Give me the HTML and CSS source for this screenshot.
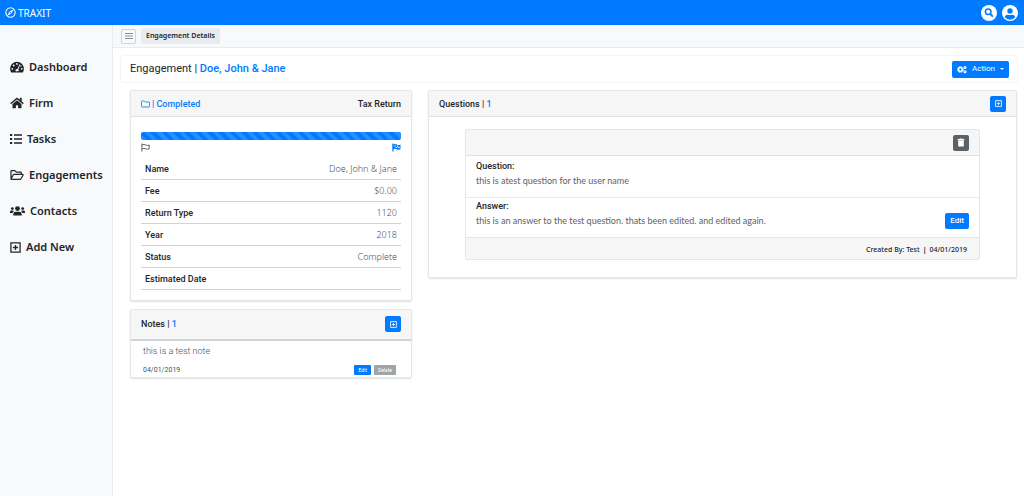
FILE: index.html
```html
<!DOCTYPE html>
<html lang="en">
<head>
<meta charset="utf-8">
<title>Traxit - Engagement Details</title>
<link rel="stylesheet" href="styles.css">
</head>
<body>
<svg class="sprite" aria-hidden="true">
  <symbol id="plus-box" viewBox="0 0 12 12"><path d="M1 1h10v10H1zM6 3.2v5.6M3.2 6h5.6" fill="none" stroke="currentColor" stroke-width="1.4"/></symbol>
</svg>
<header class="topbar">
  <a class="brand" href="#">
    <svg class="brand-icon" viewBox="0 0 12 12"><circle cx="6" cy="6" r="5.1" fill="none" stroke="currentColor" stroke-width="1.1"/><path fill="currentColor" fill-rule="evenodd" d="M9.6 2.4 7.1 7.2 2.4 9.6 4.9 4.8zM6 5.1a.9.9 0 1 0 0 1.8.9.9 0 0 0 0-1.8z"/></svg>
    <span>TRAXIT</span>
  </a>
  <div class="top-actions">
    <button class="round" type="button" aria-label="Search"><svg viewBox="0 0 16 16"><circle cx="8" cy="8" r="8" fill="#fff"/><circle cx="7.2" cy="6.8" r="2.8" fill="none" stroke="#007bff" stroke-width="1.5"/><path d="m9.3 9 2.6 2.6" stroke="#007bff" stroke-width="1.8"/></svg></button>
    <button class="round" type="button" aria-label="Account"><svg viewBox="0 0 16 16"><circle cx="8" cy="8" r="8" fill="#fff"/><circle cx="8" cy="6" r="2.7" fill="#007bff"/><path d="M2.8 12.2c.4-1.8 1.7-2.5 3-2.5.7 0 1.300.4 2.200.4s1.500-.4 2.200-.4c1.300 0 2.600.7 3 2.500A6.700 6.700 0 0 1 8 14.700a6.700 6.700 0 0 1-5.200-2.500z" fill="#007bff"/></svg></button>
  </div>
</header>
<div class="shell">
  <nav class="sidebar">
    <a href="#"><svg class="i14" viewBox="0 0 14 12"><path fill="currentColor" d="M7 .8a7 7 0 0 0-6 10.400q.2.400.7.400h10.600q.5 0 .7-.4A7 7 0 0 0 7 .8z"/><g fill="#f8f9fa"><circle cx="2.300" cy="7.800" r=".9"/><circle cx="3.700" cy="4.500" r=".9"/><circle cx="7" cy="2.900" r=".9"/><circle cx="11.700" cy="7.800" r=".9"/><circle cx="10.900" cy="4.900" r=".7"/><path d="m9.400 3.300.8.300-1.800 4.800a1.600 1.600 0 0 1-.1 1.900H5.700a1.600 1.600 0 0 1 1.900-2.300z"/></g></svg><span>Dashboard</span></a>
    <a href="#"><svg class="i14" viewBox="0 0 576 512"><path fill="currentColor" d="M280.37 148.26L96 300.11V464a16 16 0 0 0 16 16l112.06-.29a16 16 0 0 0 15.92-16V368a16 16 0 0 1 16-16h64a16 16 0 0 1 16 16v95.64a16 16 0 0 0 16 16.05L464 480a16 16 0 0 0 16-16V300L295.67 148.26a12.19 12.19 0 0 0-15.3 0zM571.6 251.47L488 182.56V44.05a12 12 0 0 0-12-12h-56a12 12 0 0 0-12 12v72.61L318.47 43a48 48 0 0 0-61 0L4.34 251.47a12 12 0 0 0-1.6 16.9l25.5 31A12 12 0 0 0 45.15 301l235.22-193.74a12.19 12.19 0 0 1 15.3 0L530.9 301a12 12 0 0 0 16.9-1.6l25.5-31a12 12 0 0 0-1.7-16.93z"/></svg><span>Firm</span></a>
    <a href="#"><svg class="i12" viewBox="0 0 12 12"><path d="M0 2h2.200M0 6h2.200M0 10h2.200" stroke="currentColor" stroke-width="2.200"/><path d="M4 2h8M4 6h8M4 10h8" stroke="currentColor" stroke-width="1.500"/></svg><span>Tasks</span></a>
    <a href="#"><svg class="i14" viewBox="0 0 14 12"><path d="M1 10V2.200q0-.6.6-.6h3.200l1.500 1.500h4.400q.6 0 .6.600v1.500M1 10l2.300-4.200q.2-.4.7-.4h8.600q.8 0 .5.600l-2.200 4q-.2.400-.7.400H1.600Q1 10.400 1 10z" fill="none" stroke="currentColor" stroke-width="1.200" stroke-linejoin="round"/></svg><span>Engagements</span></a>
    <a href="#"><svg class="i16" viewBox="0 0 16 12"><g fill="currentColor"><circle cx="8" cy="3.400" r="2.600"/><circle cx="2.500" cy="3.400" r="1.500"/><circle cx="13.500" cy="3.400" r="1.500"/><path d="M3.500 10.800V9.200q0-2.500 2.600-2.500h3.800q2.600 0 2.600 2.500v1.600zM0 8.200V7q0-1.500 1.500-1.500h1.700q.6 0 1 .4Q3 6.700 2.800 8.200zM16 8.200V7q0-1.500-1.500-1.500h-1.700q-.6 0-1 .4 1.200.8 1.400 2.300z"/></g></svg><span>Contacts</span></a>
    <a href="#"><svg class="i11"><use href="#plus-box"/></svg><span>Add New</span></a>
  </nav>
  <main class="main">
    <div class="crumbs">
      <button class="menu" type="button" aria-label="Toggle menu"><svg viewBox="0 0 8 8"><path d="M0 1.500h8M0 4h8M0 6.500h8" stroke="#868e96" stroke-width="1"/></svg></button>
      <span class="crumb">Engagement Details</span>
    </div>
    <div class="content">
      <div class="titlebar">
        <h1>Engagement | <a href="#">Doe, John &amp; Jane</a></h1>
        <button class="btn action" type="button"><svg viewBox="0 0 10 8"><g fill="none" stroke="currentColor"><circle cx="3.400" cy="4" r="1.900" stroke-width="1.500"/><circle cx="3.400" cy="4" r="3" stroke-dasharray="1.200 1.150" stroke-width=".9"/><circle cx="8" cy="2" r="1" stroke-width="1.100"/><circle cx="8" cy="6.200" r="1" stroke-width="1.100"/></g></svg><span>Action</span><i class="caret"></i></button>
      </div>
      <div class="columns">
        <div class="stack">
          <section class="card">
            <header class="card-head">
              <h2 class="blue"><svg class="folder" viewBox="0 0 9 8"><path d="M.5 1.500q0-.5.5-.5h2.300l1 1H8q.5 0 .5.500v4q0 .5-.5.500H1q-.5 0-.5-.500z" fill="none" stroke="currentColor" stroke-width=".8"/></svg><span>| Completed</span></h2>
              <h2>Tax Return</h2>
            </header>
            <div class="details">
              <div class="progress" role="progressbar" aria-label="Progress" aria-valuenow="100"></div>
              <div class="flags">
                <svg viewBox="0 0 9 9"><path d="M.9.500v8M1 2q2-1 3.700 0t3.500 0v3.800q-1.800.9-3.500 0T1 6" fill="none" stroke="#343a40" stroke-width=".8"/></svg>
                <svg viewBox="0 0 9 9"><path d="M.9.500v8" stroke="#007bff" stroke-width="1.200"/><path d="M1 1.600q2-1 3.700 0t3.800 0v4.600q-2 1-3.700 0T1 6.200z" fill="#007bff"/><path d="M2.300 2.400h1.400v1.200H2.300zM5 2.700h1.300v1.200H5zM3.700 3.900H5v1.200H3.700zM6.300 4.100h1.300v1.200H6.300z" fill="#fff"/></svg>
              </div>
              <table>
                <tr><th scope="row">Name</th><td>Doe, John &amp; Jane</td></tr>
                <tr><th scope="row">Fee</th><td>$0.00</td></tr>
                <tr><th scope="row">Return Type</th><td>1120</td></tr>
                <tr><th scope="row">Year</th><td>2018</td></tr>
                <tr><th scope="row">Status</th><td>Complete</td></tr>
                <tr><th scope="row">Estimated Date</th><td></td></tr>
              </table>
            </div>
          </section>
          <section class="card">
            <header class="card-head notes-head">
              <h2>Notes | <span class="blue">1</span></h2>
              <button class="btn square" type="button" aria-label="Add note"><svg><use href="#plus-box"/></svg></button>
            </header>
            <div class="note">
              <p>this is a test note</p>
              <div class="note-foot"><time>04/01/2019</time><span class="note-actions"><button class="btn tiny" type="button">Edit</button><button class="btn tiny gray" type="button">Delete</button></span></div>
            </div>
          </section>
        </div>
        <section class="card">
          <header class="card-head">
            <h2>Questions | <span class="blue">1</span></h2>
            <button class="btn square" type="button" aria-label="Add question"><svg><use href="#plus-box"/></svg></button>
          </header>
          <div class="questions">
            <article class="question">
              <header class="card-head"><button class="btn square dark" type="button" aria-label="Delete question"><svg class="trash" viewBox="0 0 8 10"><path fill="currentColor" d="M.3 1.200h2L2.900.5h2.200l.6.700h2v1.200H.3zM.9 2.900h6.200v5.900q0 .7-.7.700H1.600q-.7 0-.7-.7z"/></svg></button></header>
              <div class="qa first"><h3>Question:</h3><p>this is atest question for the user name</p></div>
              <div class="qa"><h3>Answer:</h3><div class="answer"><p>this is an answer to the test question. thats been edited. and edited again.</p><button class="btn edit" type="button">Edit</button></div></div>
              <footer><span>Created By: Test</span><b>|</b><time>04/01/2019</time></footer>
            </article>
          </div>
        </section>
      </div>
    </div>
  </main>
</div>
</body>
</html>
```
FILE: styles.css
```css
* { box-sizing: border-box; }
body {
  margin: 0;
  min-height: 100vh;
  display: flex;
  flex-direction: column;
  font: 9px/14px Roboto, "Noto Sans", sans-serif;
  color: #212529;
  background: #fff;
}
.sprite { position: absolute; width: 0; height: 0; }
svg { display: block; flex: none; }
h1, h2, h3, p { margin: 0; }
a { color: #007bff; text-decoration: none; }
button { font: inherit; padding: 0; border: 0; cursor: pointer; }

.topbar {
  height: 25px;
  padding: 0 6px 0 5px;
  display: flex;
  align-items: center;
  justify-content: space-between;
  background: #007bff;
}
.brand { display: flex; align-items: center; gap: 2px; color: #fff; font-family: "Noto Sans", sans-serif; font-size: 10px; }
.brand-icon { width: 11px; height: 11px; }
.top-actions { display: flex; gap: 5px; }
.round { background: none; }
.round svg { width: 16px; height: 16px; }

.shell { flex: 1; display: flex; }
.sidebar {
  width: 113px;
  flex: none;
  padding: 34px 10px;
  display: flex;
  flex-direction: column;
  gap: 20px;
  background: #f8f9fa;
  border-right: 1px solid #e9ecef;
}
.sidebar a {
  height: 16px;
  display: flex;
  align-items: center;
  gap: 5px;
  color: #212529;
  font-family: "Noto Sans", sans-serif;
  font-size: 11px;
  font-weight: 600;
}
.i11 { width: 11px; height: 11px; }
.i12 { width: 12px; height: 12px; }
.i14 { width: 14px; height: 12px; }
.i16 { width: 15px; height: 12px; }

.main { flex: 1; min-width: 0; }
.crumbs {
  height: 23px;
  padding: 0 8px;
  display: flex;
  align-items: center;
  gap: 5px;
  background: #f8f9fa;
  border-bottom: 1px solid #e9ecef;
}
.menu {
  width: 15px;
  height: 15px;
  display: grid;
  place-items: center;
  background: #f8f9fa;
  border: 1px solid #ced4da;
  border-radius: 2px;
}
.menu svg { width: 8px; height: 8px; }
.crumb {
  padding: 0 5px;
  line-height: 16px;
  font-family: "Noto Sans", sans-serif;
  font-size: 7px;
  font-weight: 600;
  background: #e9ecef;
  border-radius: 2px;
}
.content { padding: 8px 7px 8px 8px; }
.titlebar {
  height: 26px;
  padding: 0 8px 0 9px;
  display: flex;
  align-items: center;
  justify-content: space-between;
  border-radius: 2px;
  box-shadow: 0 0 2px rgba(0, 0, 0, .15);
}
h1 { font-size: 11px; line-height: 16px; font-weight: 400; }
h1 a { font-weight: 500; }
.btn { color: #fff; background: #007bff; border-radius: 2px; }
.action {
  height: 17px;
  padding: 0 5px;
  display: flex;
  align-items: center;
  gap: 5px;
  font-size: 8px;
}
.action svg { width: 10px; height: 9px; }
.caret { border: 2px solid transparent; border-top-color: #fff; border-bottom: 0; }

.columns {
  padding: 8px 0 0 9px;
  display: grid;
  grid-template-columns: minmax(0, 282fr) minmax(0, 589fr);
  align-items: start;
  gap: 16px;
}
.stack { display: grid; gap: 8px; }
.card { border: 1px solid #e4e6e8; border-radius: 2px; box-shadow: 0 1px 2px rgba(0, 0, 0, .12); }
.card-head {
  height: 26px;
  padding: 0 10px;
  display: flex;
  align-items: center;
  justify-content: space-between;
  background: #f6f6f6;
  border-bottom: 1px solid #dee2e6;
}
h2, h3 { font-size: 9px; line-height: 14px; font-weight: 500; }
.blue { color: #007bff; }
h2.blue { display: flex; align-items: center; gap: 2px; }
.folder { width: 9px; height: 8px; }
.square { width: 16px; height: 16px; display: grid; place-items: center; }
.square svg { width: 7px; height: 7px; }
.square .trash { width: 8px; height: 9px; }
.details { padding: 15px 10px 10px; }
.progress {
  height: 8px;
  border-radius: 2px;
  background: repeating-linear-gradient(45deg, #268fff 0 4px, #007bff 4px 8px);
}
.flags { padding: 3px 0 5px; display: flex; justify-content: space-between; }
.flags svg { width: 9px; height: 9px; }
table { width: 100%; border-collapse: collapse; }
th, td { height: 22px; padding: 2px 4px 0; border-bottom: 1px solid #ced4da; }
th { text-align: left; font-weight: 500; }
td { text-align: right; color: #495057; font-family: "Noto Sans", sans-serif; font-weight: 300; }
.notes-head { height: 31px; border-bottom: 2px solid #ced4da; }
.note { padding: 2px 15px 1px 12px; color: #495057; }
.note p { font-weight: 300; line-height: 16px; }
.note-foot { padding-top: 5px; display: flex; align-items: center; justify-content: space-between; font-size: 7px; line-height: 12px; }
.note-actions { display: flex; gap: 3px; }
.tiny { padding: 0 4px; font-size: 5px; line-height: 10px; border-radius: 1px; }
.gray { background: #a0a5aa; }
.questions { padding: 12px 36px 17px; }
.question { border: 1px solid #e4e6e8; border-radius: 2px; }
.question .card-head { justify-content: flex-end; }
.dark { background: #5a6268; }
.qa { padding: 1px 10px 8px; }
.qa.first { padding: 3px 10px 8px; border-bottom: 1px solid #e9ecef; }
.qa p { color: #5a6268; font-family: Lato, "Noto Sans", sans-serif; line-height: 16px; }
.answer { display: flex; justify-content: space-between; align-items: center; }
.edit { padding: 0 5px; font-size: 8px; line-height: 16px; font-weight: 500; }
footer {
  height: 22px;
  padding: 2px 12px 0;
  display: flex;
  align-items: center;
  justify-content: flex-end;
  gap: 3px;
  font-family: "Noto Sans", sans-serif;
  font-size: 7px;
  font-weight: 500;
  background: #f6f6f6;
  border-top: 1px solid #e4e6e8;
}
```
